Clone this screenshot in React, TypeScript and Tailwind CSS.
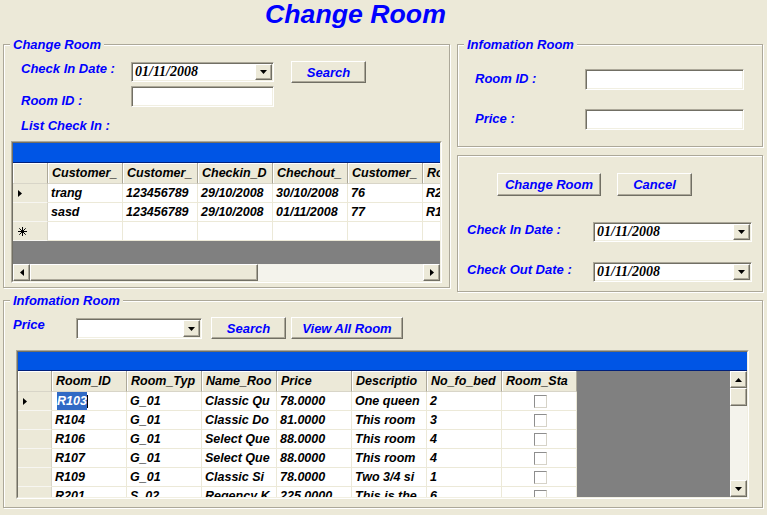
import React from 'react'

const groupBox = 'border border-[#aca899] shadow-[inset_1px_1px_0_#fff,1px_1px_0_#fff]'
const sunken = 'border border-t-[#aca899] border-l-[#aca899] border-r-white border-b-white shadow-[inset_1px_1px_0_#716f64,inset_-1px_-1px_0_#f1efe2]'
const raised = 'border border-t-white border-l-white border-r-[#716f64] border-b-[#716f64] shadow-[inset_-1px_-1px_0_#aca899] bg-[#ece9d8]'
const label = 'text-[13px] leading-[15px] font-bold italic text-[#0000ff] whitespace-nowrap'
const headCell = 'flex h-full shrink-0 items-center overflow-hidden whitespace-nowrap bg-[#ece9d8] pl-[4px] border-r border-r-[#aca899] border-b border-b-[#d8d5c8] shadow-[inset_1px_1px_0_#fff] text-[12.5px] font-bold italic text-black'
const cell = 'flex h-full w-[75px] shrink-0 items-center overflow-hidden whitespace-nowrap bg-white pl-[3px] border-r border-b border-[#ece9d8] text-[12.5px] font-bold italic text-black'
const rowHead = 'flex h-full shrink-0 items-center bg-[#ece9d8] pl-[5px] border-r border-r-[#d8d5c8] border-b border-b-[#f7f6f1]'

function Arrow({ dir }: { dir: 'up' | 'down' | 'left' | 'right' }) {
  const pts = {
    up: '0,4 7,4 3.5,0',
    down: '0,0 7,0 3.5,4',
    left: '4,0 4,7 0,3.5',
    right: '0,0 0,7 4,3.5',
  }[dir]
  const vertical = dir === 'up' || dir === 'down'
  return (
    <svg width={vertical ? 7 : 4} height={vertical ? 4 : 7} viewBox={vertical ? '0 0 7 4' : '0 0 4 7'}>
      <polygon points={pts} fill="#000" />
    </svg>
  )
}

function Star() {
  return (
    <svg width="9" height="9" viewBox="0 0 9 9" stroke="#000" strokeWidth="1">
      <line x1="4.5" y1="0" x2="4.5" y2="9" />
      <line x1="0" y1="4.5" x2="9" y2="4.5" />
      <line x1="1.3" y1="1.3" x2="7.7" y2="7.7" />
      <line x1="7.7" y1="1.3" x2="1.3" y2="7.7" />
    </svg>
  )
}

function Btn({ children, className = '' }: { children: React.ReactNode; className?: string }) {
  return (
    <div className={`flex items-center justify-center ${raised} ${label} ${className}`}>
      {children}
    </div>
  )
}

function TextBox({ className = '' }: { className?: string }) {
  return <div className={`bg-white ${sunken} ${className}`} />
}

function Combo({ value = '', className = '' }: { value?: string; className?: string }) {
  return (
    <div className={`flex bg-white ${sunken} ${className}`}>
      <span className="flex-1 self-center pl-[3px] font-['Liberation_Serif','Times_New_Roman',serif] text-[14px] leading-none font-bold italic text-black">
        {value}
      </span>
      <div className={`my-[1px] mr-[1px] flex w-[17px] items-center justify-center ${raised}`}>
        <Arrow dir="down" />
      </div>
    </div>
  )
}

function Grid1() {
  const cols = ['Customer_', 'Customer_', 'Checkin_D', 'Chechout_', 'Customer_', 'Ro']
  const rows = [
    ['trang', '123456789', '29/10/2008', '30/10/2008', '76', 'R2'],
    ['sasd', '123456789', '29/10/2008', '01/11/2008', '77', 'R1'],
  ]
  return (
    <div className="mt-[8px] ml-[7px] h-[142px] w-[431px] border border-t-[#aca899] border-l-[#aca899] border-r-white border-b-white">
      <div className="flex h-full flex-col overflow-hidden border border-t-[#716f64] border-l-[#716f64] border-r-[#f1efe2] border-b-[#f1efe2]">
        <div className="h-[20px] shrink-0 border-b border-[#00207a] bg-[#0055e5]" />
        <div className="flex h-[21px] shrink-0">
          <div className={`${headCell} w-[35px]`} />
          {cols.map((c, i) => (
            <div key={i} className={`${headCell} w-[75px]`}>{c}</div>
          ))}
        </div>
        {rows.map((r, i) => (
          <div key={i} className="flex h-[19px] shrink-0">
            <div className={`${rowHead} w-[35px]`}>{i === 0 && <Arrow dir="right" />}</div>
            {r.map((v, j) => (
              <div key={j} className={cell}>{v}</div>
            ))}
          </div>
        ))}
        <div className="flex h-[19px] shrink-0">
          <div className={`${rowHead} w-[35px] pl-[4px]`}><Star /></div>
          {cols.map((_, j) => (
            <div key={j} className={cell} />
          ))}
        </div>
        <div className="flex-1 bg-[#808080]" />
        <div className="flex h-[17px] shrink-0 bg-[#f4f3ec]">
          <div className={`flex w-[17px] items-center justify-center ${raised}`}><Arrow dir="left" /></div>
          <div className={`w-[228px] ${raised}`} />
          <div className="flex-1" />
          <div className={`flex w-[17px] items-center justify-center ${raised}`}><Arrow dir="right" /></div>
        </div>
      </div>
    </div>
  )
}

function Grid2() {
  const cols = ['Room_ID', 'Room_Typ', 'Name_Roo', 'Price', 'Descriptio', 'No_fo_bed', 'Room_Sta']
  const rows = [
    ['R103', 'G_01', 'Classic Qu', '78.0000', 'One queen', '2'],
    ['R104', 'G_01', 'Classic Do', '81.0000', 'This room', '3'],
    ['R106', 'G_01', 'Select Que', '88.0000', 'This room', '4'],
    ['R107', 'G_01', 'Select Que', '88.0000', 'This room', '4'],
    ['R109', 'G_01', 'Classic Si', '78.0000', 'Two 3/4 si', '1'],
    ['R201', 'S_02', 'Regency K', '225.0000', 'This is the', '6'],
  ]
  return (
    <div className="mt-[11px] ml-[12px] h-[149px] w-[733px] border border-t-[#aca899] border-l-[#aca899] border-r-white border-b-white">
      <div className="flex h-full flex-col overflow-hidden border border-t-[#716f64] border-l-[#716f64] border-r-[#f1efe2] border-b-[#f1efe2]">
        <div className="h-[19px] shrink-0 border-b border-[#00207a] bg-[#0055e5]" />
        <div className="flex min-h-0 flex-1">
          <div className="flex w-[559px] shrink-0 flex-col overflow-hidden">
            <div className="flex h-[21px] shrink-0">
              <div className={`${headCell} w-[34px]`} />
              {cols.map((c, i) => (
                <div key={i} className={`${headCell} w-[75px]`}>{c}</div>
              ))}
            </div>
            {rows.map((r, i) => (
              <div key={i} className="flex h-[19px] shrink-0">
                <div className={`${rowHead} w-[34px]`}>{i === 0 && <Arrow dir="right" />}</div>
                {r.map((v, j) =>
                  i === 0 && j === 0 ? (
                    <div key={j} className={`${cell} pl-[5px]`}>
                      <span className="bg-[#316ac5] text-white">{v}</span>
                      <span className="h-[13px] w-px bg-black" />
                    </div>
                  ) : (
                    <div key={j} className={cell}>{v}</div>
                  )
                )}
                <div className={`${cell} justify-center pl-0`}>
                  <div className="h-[13px] w-[13px] border border-t-[#8e8e8e] border-l-[#8e8e8e] border-r-[#d6d3c8] border-b-[#d6d3c8] bg-white" />
                </div>
              </div>
            ))}
          </div>
          <div className="flex-1 bg-[#808080]" />
          <div className="flex w-[17px] shrink-0 flex-col bg-[#f4f3ec]">
            <div className={`flex h-[17px] items-center justify-center ${raised}`}><Arrow dir="up" /></div>
            <div className={`h-[18px] ${raised}`} />
            <div className="flex-1" />
            <div className={`flex h-[17px] items-center justify-center ${raised}`}><Arrow dir="down" /></div>
          </div>
        </div>
      </div>
    </div>
  )
}

export default function App() {
  return (
    <div className="h-[515px] w-[767px] overflow-hidden bg-[#ece9d8] px-[3px] font-['Liberation_Sans',Arial,sans-serif]">
      <div className="h-[37px] pl-[262px] text-[26.7px] leading-[29px] font-bold italic text-[#0000ff]">Change Room</div>

      <div className="flex items-start">
        <fieldset className={`w-[447px] pb-[4px] ${groupBox}`}>
          <legend className={`ml-[6px] bg-[#ece9d8] px-[3px] ${label}`}>Change Room</legend>
          <div className="mt-[9px] flex items-start pl-[17px]">
            <span className={`w-[110px] ${label}`}>Check In Date :</span>
            <Combo className="mt-[1px] h-[20px] w-[143px]" value="01/11/2008" />
            <Btn className="ml-[17px] h-[22px] w-[75px]">Search</Btn>
          </div>
          <div className="mt-[3px] flex items-start pl-[17px]">
            <span className={`mt-[7px] w-[110px] ${label}`}>Room ID :</span>
            <TextBox className="h-[21px] w-[143px]" />
          </div>
          <div className={`mt-[10px] pl-[17px] ${label}`}>List Check In :</div>
          <Grid1 />
        </fieldset>

        <div className="ml-[7px] flex w-[306px] flex-col">
          <fieldset className={`pb-[16px] ${groupBox}`}>
            <legend className={`ml-[6px] bg-[#ece9d8] px-[3px] ${label}`}>Infomation Room</legend>
            <div className="mt-[17px] flex items-start pl-[17px]">
              <span className={`mt-[2px] w-[110px] ${label}`}>Room ID :</span>
              <TextBox className="h-[21px] w-[159px]" />
            </div>
            <div className="mt-[19px] flex items-start pl-[17px]">
              <span className={`mt-[2px] w-[110px] ${label}`}>Price :</span>
              <TextBox className="h-[21px] w-[159px]" />
            </div>
          </fieldset>

          <div className={`mt-[8px] pb-[9px] ${groupBox}`}>
            <div className="mt-[17px] flex pl-[39px]">
              <Btn className="h-[23px] w-[104px]">Change Room</Btn>
              <Btn className="ml-[16px] h-[23px] w-[75px]">Cancel</Btn>
            </div>
            <div className="mt-[26px] flex items-start pl-[9px]">
              <span className={`w-[126px] ${label}`}>Check In Date :</span>
              <Combo className="h-[20px] w-[159px]" value="01/11/2008" />
            </div>
            <div className="mt-[20px] flex items-start pl-[9px]">
              <span className={`w-[126px] ${label}`}>Check Out Date :</span>
              <Combo className="h-[20px] w-[159px]" value="01/11/2008" />
            </div>
          </div>
        </div>
      </div>

      <fieldset className={`mt-[1px] w-[760px] pb-[8px] ${groupBox}`}>
        <legend className={`ml-[6px] bg-[#ece9d8] px-[3px] ${label}`}>Infomation Room</legend>
        <div className="mt-[9px] flex items-start pl-[9px]">
          <span className={`w-[63px] ${label}`}>Price</span>
          <Combo className="mt-[1px] h-[21px] w-[126px]" />
          <Btn className="ml-[9px] h-[22px] w-[75px]">Search</Btn>
          <Btn className="ml-[5px] h-[22px] w-[112px]">View All Room</Btn>
        </div>
        <Grid2 />
      </fieldset>
    </div>
  )
}
